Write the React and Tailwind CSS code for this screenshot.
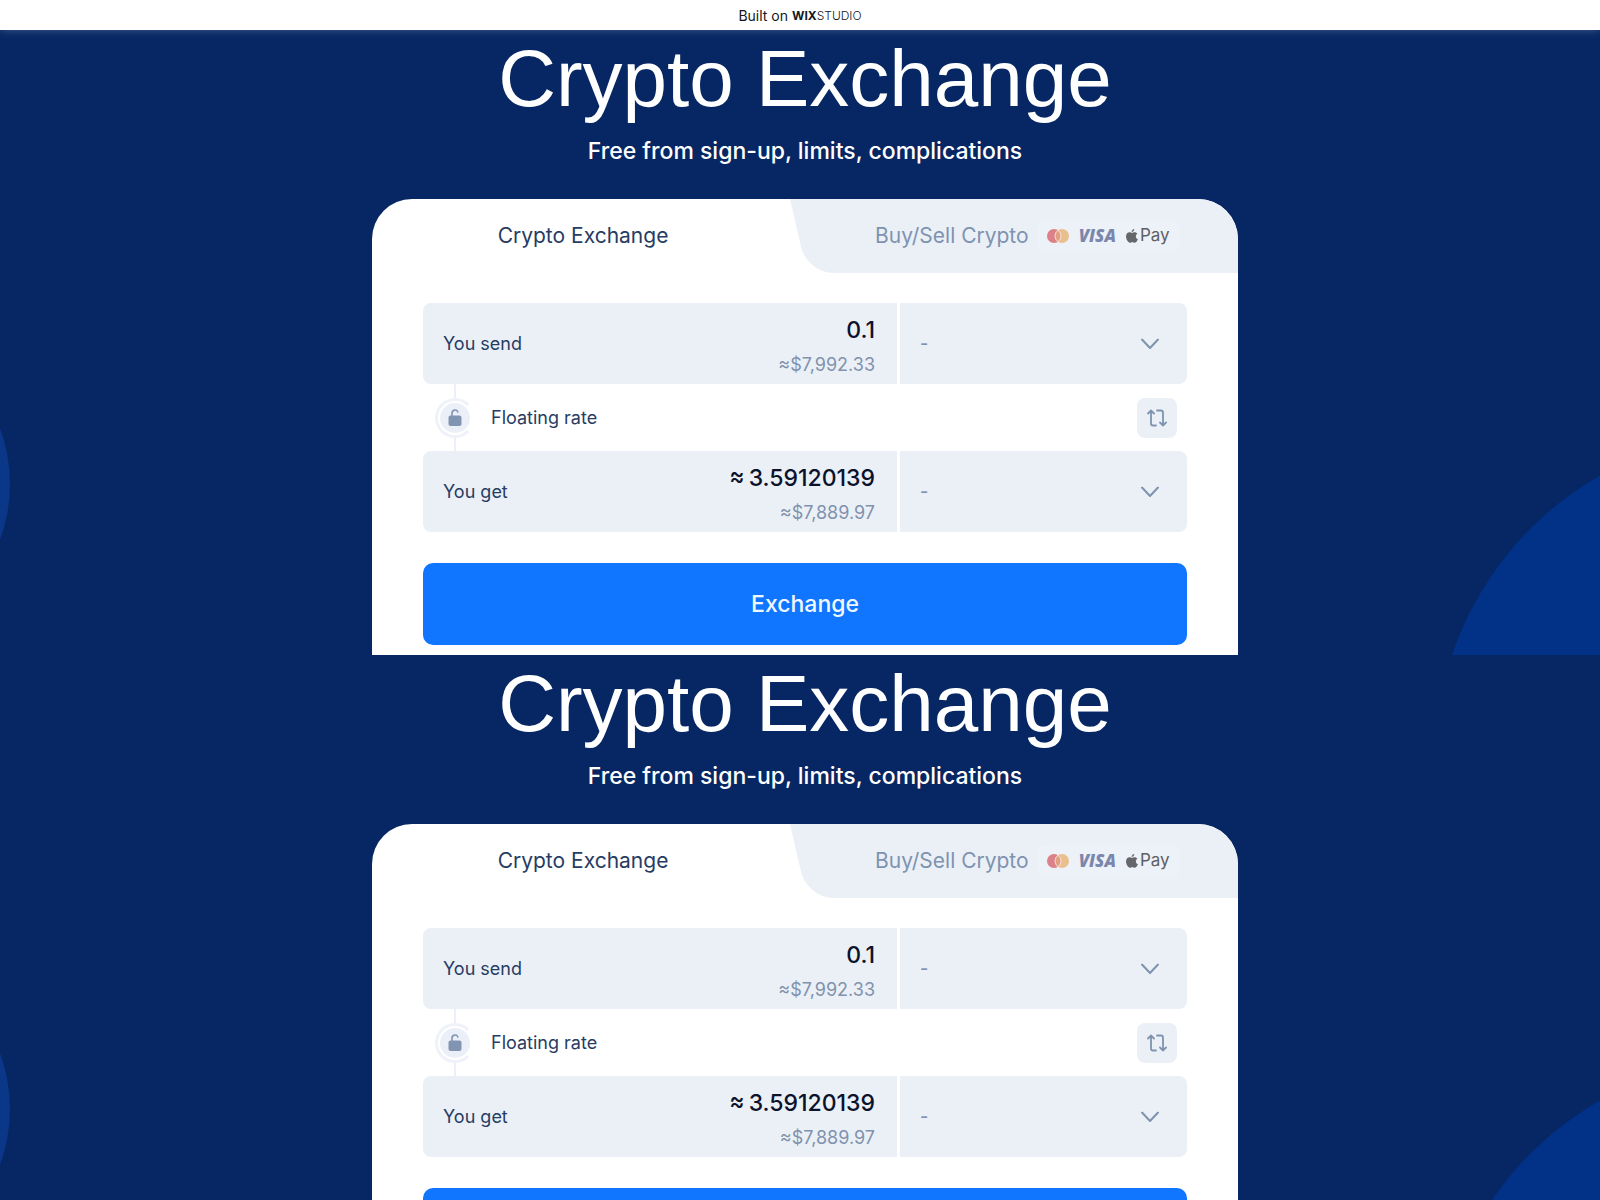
import { useState } from 'react';

const MastercardIcon = () => (
  <svg viewBox="0 0 22 14" className="w-[22px] h-3.5" aria-hidden="true">
    <circle cx="7" cy="7" r="7" fill="#dc8187" />
    <circle cx="15" cy="7" r="7" fill="#e9c08d" />
    <path d="M11 1.3a7 7 0 0 1 0 11.4a7 7 0 0 1 0-11.4z" fill="#e3a080" stroke="#f3e3df" strokeWidth="1" />
  </svg>
);

const AppleIcon = () => (
  <svg viewBox="0 0 24 28" className="w-3 h-3.5" fill="#66676b" aria-hidden="true">
    <path d="M16.6 0c.2 2.900-2.400 6-5.400 5.900C10.900 3.100 13.700.2 16.600 0z" />
    <path d="M12.200 7.800c1.300 0 2.900-1.400 5.200-1.400 2 0 4.200 1.100 5.500 3.100-4.700 2.800-3.900 9 .9 11-.9 2.400-3.400 7-6.100 7-2 0-2.700-1.200-5-1.200s-3.100 1.200-5 1.200C4.300 27.500 0 20.700 0 15.200 0 9.600 3.500 6.600 7 6.600c2.200 0 3.900 1.200 5.200 1.200z" />
  </svg>
);

const LockIcon = () => (
  <svg viewBox="0 0 14 17" className="w-3.5 h-[17px]" aria-hidden="true">
    <path d="M4 7V4a3 3 0 0 1 5.800-1" fill="none" stroke="#8195b3" strokeWidth="1.600" strokeLinecap="round" />
    <rect x="0.500" y="6.500" width="13" height="10.500" rx="2" fill="#8195b3" />
  </svg>
);

const SwapIcon = () => (
  <svg viewBox="0 0 20 18" className="w-5 h-[18px]" fill="none" stroke="#7f93af" strokeWidth="1.800" strokeLinecap="round" strokeLinejoin="round" aria-hidden="true">
    <path d="M1 4.500 4 1.500l3 3M4 1.500v13a2 2 0 0 0 2 2h3" />
    <path d="M10 1.500h4a2 2 0 0 1 2 2v13M13 13.500l3 3 3-3" />
  </svg>
);

const ChevronIcon = () => (
  <svg viewBox="0 0 18 11" className="absolute right-7 top-1/2 -translate-y-1/2 w-[18px] h-[11px] pointer-events-none" fill="none" stroke="#7f93af" strokeWidth="2" strokeLinecap="round" strokeLinejoin="round" aria-hidden="true">
    <path d="M1 1l8 8.500L17 1" />
  </svg>
);

const AmountRow = ({ id, label, value, usd, onChange }) => (
  <div className="flex gap-[3px] h-[81px] rounded-lg overflow-hidden">
    <div className="flex-1 flex items-center bg-[#ebf0f7] pl-5 pr-[22px]">
      <label htmlFor={id} className="text-lg text-[#273c63]">{label}</label>
      <div className="flex-1 min-w-0 pt-1.5 text-right">
        <input
          id={id}
          value={value}
          onChange={onChange}
          readOnly={!onChange}
          className="block w-full h-8 bg-transparent text-right text-[23px] font-medium text-[#0b132b] outline-none"
        />
        <div className="mt-1 text-lg leading-7 text-[#8092ad]">{usd}</div>
      </div>
    </div>
    <div className="relative w-[287px]">
      <select
        aria-label={`${label} currency`}
        className="w-full h-full appearance-none bg-[#ebf0f7] pl-5 text-lg font-medium text-[#7f93af] outline-none"
      >
        <option>-</option>
      </select>
      <ChevronIcon />
    </div>
  </div>
);

const ExchangeSection = ({ id }) => {
  const [amount, setAmount] = useState('0.1');

  return (
    <section className="relative overflow-hidden bg-[#062763] pl-2.5 h-[625px]">
      {/* Background circles */}
      <div className="absolute -left-[314px] top-[292px] size-[324px] rounded-full bg-[#0b3788]" />
      <div className="absolute -right-[487px] top-[403px] size-[652px] rounded-full bg-[#023188]" />

      <div className="relative pt-[5px] text-center text-white">
        <h1 className="font-['Liberation_Sans',sans-serif] text-[80px] leading-[88px]">Crypto Exchange</h1>
        <p className="mt-3 text-[23px] leading-8 font-medium">Free from sign-up, limits, complications</p>
      </div>

      <div className="relative mx-auto mt-8 max-w-[866px] h-[456px] rounded-t-[40px] bg-white overflow-hidden">
        {/* Tabs */}
        <div className="flex h-[74px]">
          <button type="button" className="flex-1 pl-1 text-[21px] text-[#273c63]">Crypto Exchange</button>
          <button
            type="button"
            className="relative w-[448px] flex items-center pl-[85px] gap-2 text-[21px] text-[#7e93b0] before:absolute before:inset-0 before:origin-top-left before:skew-x-[13deg] before:rounded-bl-[26px] before:bg-[#ebf0f7]"
          >
            <span className="relative">Buy/Sell Crypto</span>
            <span className="relative flex items-center gap-2.5 rounded-lg bg-[#edf1f8] px-2.5 h-8">
              <MastercardIcon />
              <span className="font-['Open_Sans',sans-serif] text-[17px] font-extrabold italic text-[#7c86ac]">VISA</span>
              <span className="flex items-center gap-0.5 text-[17px] text-[#5f6064]">
                <AppleIcon />
                Pay
              </span>
            </span>
          </button>
        </div>

        <div className="px-[51px] pt-[30px]">
          <AmountRow id={`send-${id}`} label="You send" value={amount} usd="≈$7,992.33" onChange={(e) => setAmount(e.target.value)} />

          <div className="flex items-center justify-between h-[67px] pl-3 pr-2.5">
            <div className="flex items-center gap-4 h-full">
              <div className="flex flex-col items-center h-full">
                <span className="w-0.5 flex-1 bg-[#eceff7]" />
                <span className="flex items-center justify-center size-10 rounded-full border-3 border-[#eff2f9] border-r-transparent">
                  <span className="flex items-center justify-center size-[30px] rounded-full bg-[#ebeff7]">
                    <LockIcon />
                  </span>
                </span>
                <span className="w-0.5 flex-1 bg-[#eceff7]" />
              </div>
              <span className="text-lg text-[#273c63]">Floating rate</span>
            </div>
            <button type="button" aria-label="Swap" className="flex items-center justify-center size-10 rounded-lg bg-[#ebf0f7]">
              <SwapIcon />
            </button>
          </div>

          <AmountRow id={`get-${id}`} label="You get" value={'≈\u20093.59120139'} usd="≈$7,889.97" />

          <button type="button" className="mt-[31px] w-full h-[82px] rounded-[10px] bg-[#1075ff] text-[23px] font-medium text-[#f0f8ff]">
            Exchange
          </button>
        </div>
      </div>
    </section>
  );
};

const App = () => {
  return (
    <div className="h-screen overflow-hidden bg-[#062763] font-['Inter',sans-serif]">
      <header className="relative z-10 flex items-center justify-center gap-1 h-[30px] pt-px bg-white text-sm text-[#131720] shadow-[0_0_10px_rgba(255,255,255,0.25)]">
        <span>Built on</span>
        <span className="flex items-center text-xs">
          <span className="font-bold">WIX</span>
          <span className="font-light">STUDIO</span>
        </span>
      </header>
      <ExchangeSection id="top" />
      <ExchangeSection id="bottom" />
    </div>
  );
};

export default App;
